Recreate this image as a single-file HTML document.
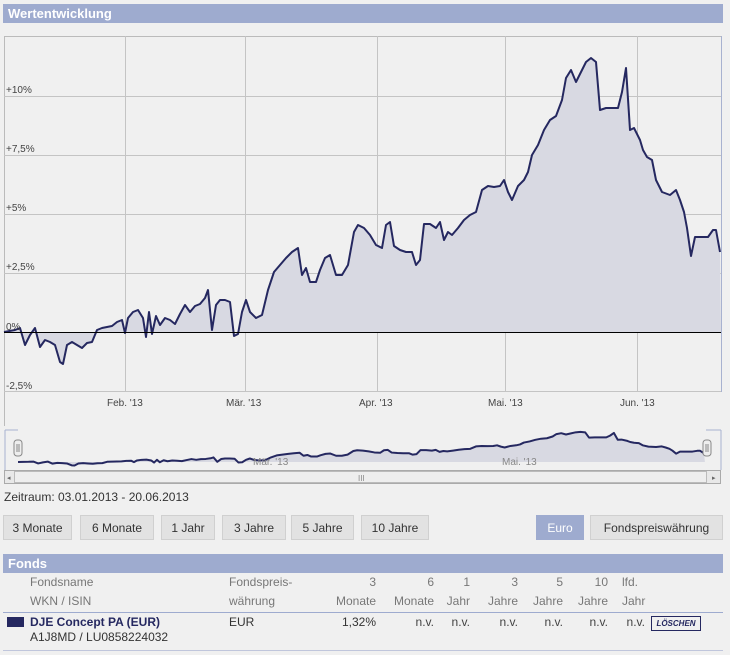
<!DOCTYPE html>
<html><head><meta charset="utf-8"><style>
body{margin:0;width:730px;height:655px;background:#f0f0f0;font-family:"Liberation Sans",sans-serif;font-size:12px;color:#333;position:relative;overflow:hidden}
.hdr{position:absolute;left:3px;width:720px;height:19px;background:#9eabcf;color:#fff;font-weight:bold;font-size:13px;line-height:19px;padding-left:5px;box-sizing:border-box}
.btn{position:absolute;top:515px;height:25px;line-height:25px;background:#e2e2e2;border:1px solid #d0d0d0;box-sizing:border-box;text-align:center;font-size:12px;color:#333}
.t{position:absolute;font-size:12px;color:#777}
.r{text-align:right}
</style></head><body>
<div class="hdr" style="top:4px">Wertentwicklung</div>
<svg style="position:absolute;left:0;top:0" width="730" height="490">
<rect x="4.5" y="36.5" width="717" height="355" fill="#f0f0f0" stroke="#bbb"/>
<line x1="721.5" y1="36" x2="721.5" y2="392" stroke="#a8b2d0"/>
<g stroke="#c4c4c4" stroke-width="1">
<line x1="4" y1="96.5" x2="721" y2="96.5"/><line x1="4" y1="155.5" x2="721" y2="155.5"/><line x1="4" y1="214.5" x2="721" y2="214.5"/><line x1="4" y1="273.5" x2="721" y2="273.5"/><line x1="4" y1="391.5" x2="721" y2="391.5"/>
<line x1="125.5" y1="36" x2="125.5" y2="392"/><line x1="245.5" y1="36" x2="245.5" y2="392"/><line x1="377.5" y1="36" x2="377.5" y2="392"/><line x1="505.5" y1="36" x2="505.5" y2="392"/><line x1="637.5" y1="36" x2="637.5" y2="392"/>
</g>
<line x1="4.5" y1="392" x2="4.5" y2="426" stroke="#bbb"/>
<g id="ln">
<path d="M4,332 L15,330 20,328 25,345 30,335 35,328 40,347 45,340 50,342 55,345 60,362 63,364 67,345 72,342 77,345 82,348 87,343 92,342 97,330 102,328 107,327 112,326 117,322 122,320 125,333 128,318 133,312 138,310 143,318 146,337 149,312 152,334 156,316 160,325 165,318 170,320 175,324 180,314 185,305 190,312 195,306 200,304 205,298 208,290 212,330 216,305 220,300 225,300 230,302 234,336 238,334 242,312 246,300 250,312 256,318 262,315 268,290 274,272 280,265 286,258 292,252 298,248 302,275 306,268 310,282 316,282 320,270 325,258 330,255 336,275 342,275 348,265 354,232 358,225 364,228 370,235 376,245 382,248 386,225 390,222 394,246 400,250 406,252 412,252 416,265 420,260 424,224 430,224 436,228 440,222 444,240 448,232 452,235 458,228 464,220 470,215 476,212 482,190 488,186 494,187 500,186 504,180 508,192 512,200 518,186 524,180 528,172 532,155 538,145 544,130 550,120 556,116 562,100 566,78 571,70 576,82 580,74 586,62 591,58 596,62 600,110 606,108 618,108 622,92 626,68 630,130 634,128 640,140 643,150 647,157 652,160 656,180 662,192 670,195 676,190 680,200 684,212 687,228 691,256 695,237 708,237 713,230 716,230 720,252 L721,332 L4,332 Z" fill="#d8d9e2" stroke="none"/>
<path d="M4,332 L15,330 20,328 25,345 30,335 35,328 40,347 45,340 50,342 55,345 60,362 63,364 67,345 72,342 77,345 82,348 87,343 92,342 97,330 102,328 107,327 112,326 117,322 122,320 125,333 128,318 133,312 138,310 143,318 146,337 149,312 152,334 156,316 160,325 165,318 170,320 175,324 180,314 185,305 190,312 195,306 200,304 205,298 208,290 212,330 216,305 220,300 225,300 230,302 234,336 238,334 242,312 246,300 250,312 256,318 262,315 268,290 274,272 280,265 286,258 292,252 298,248 302,275 306,268 310,282 316,282 320,270 325,258 330,255 336,275 342,275 348,265 354,232 358,225 364,228 370,235 376,245 382,248 386,225 390,222 394,246 400,250 406,252 412,252 416,265 420,260 424,224 430,224 436,228 440,222 444,240 448,232 452,235 458,228 464,220 470,215 476,212 482,190 488,186 494,187 500,186 504,180 508,192 512,200 518,186 524,180 528,172 532,155 538,145 544,130 550,120 556,116 562,100 566,78 571,70 576,82 580,74 586,62 591,58 596,62 600,110 606,108 618,108 622,92 626,68 630,130 634,128 640,140 643,150 647,157 652,160 656,180 662,192 670,195 676,190 680,200 684,212 687,228 691,256 695,237 708,237 713,230 716,230 720,252" fill="none" stroke="#252860" stroke-width="2" stroke-linejoin="round" vector-effect="non-scaling-stroke"/>
</g>
<line x1="4" y1="332.5" x2="721" y2="332.5" stroke="#000"/>
<g font-family="Liberation Sans" font-size="10" fill="#444">
<text x="6" y="93">+10%</text><text x="6" y="152">+7,5%</text><text x="6" y="211">+5%</text><text x="6" y="270">+2,5%</text><text x="6" y="330">0%</text><text x="6" y="389">-2,5%</text>
<text x="107" y="406">Feb. '13</text><text x="226" y="406">Mär. '13</text><text x="359" y="406">Apr. '13</text><text x="488" y="406">Mai. '13</text><text x="620" y="406">Jun. '13</text>
</g>
<!-- navigator -->
<line x1="5" y1="430" x2="5" y2="470" stroke="#a8b2d0"/><line x1="721" y1="430" x2="721" y2="470" stroke="#a8b2d0"/>
<line x1="5" y1="430" x2="18" y2="430" stroke="#a8b2d0"/><line x1="706" y1="430" x2="721" y2="430" stroke="#a8b2d0"/>
<g transform="translate(14.2,425.5) scale(0.958,0.11)"><use href="#ln"/></g>
<g font-family="Liberation Sans" font-size="10" fill="#888"><text x="253" y="465">Mär. '13</text><text x="502" y="465">Mai. '13</text></g>
<rect x="14" y="440" width="8" height="16" rx="3" fill="#eee" stroke="#888"/><line x1="17" y1="444" x2="17" y2="452" stroke="#888"/><line x1="19" y1="444" x2="19" y2="452" stroke="#888"/>
<rect x="703" y="440" width="8" height="16" rx="3" fill="#eee" stroke="#888"/><line x1="706" y1="444" x2="706" y2="452" stroke="#888"/><line x1="708" y1="444" x2="708" y2="452" stroke="#888"/>
<rect x="4.5" y="470.5" width="716" height="13" fill="#e8e8e8" stroke="#aaa"/>
<rect x="14.5" y="471.5" width="692" height="11" fill="#eee" stroke="#bbb"/>
<text x="358" y="481" font-size="8" fill="#888" font-family="Liberation Sans">III</text>
<text x="7" y="480" font-size="7" fill="#666">◂</text><text x="712" y="480" font-size="7" fill="#666">▸</text>
</svg>
<div style="position:absolute;left:4px;top:490px;font-size:12px;color:#333">Zeitraum: 03.01.2013 - 20.06.2013</div>
<div class="btn" style="left:3px;width:69px">3 Monate</div>
<div class="btn" style="left:80px;width:74px">6 Monate</div>
<div class="btn" style="left:161px;width:54px">1 Jahr</div>
<div class="btn" style="left:222px;width:64px">3 Jahre</div>
<div class="btn" style="left:291px;width:63px">5 Jahre</div>
<div class="btn" style="left:361px;width:68px">10 Jahre</div>
<div class="btn" style="left:536px;width:48px;background:#9eabcf;border-color:#9eabcf;color:#fff">Euro</div>
<div class="btn" style="left:590px;width:133px">Fondspreiswährung</div>
<div class="hdr" style="top:554px">Fonds</div>
<div class="t" style="left:30px;top:575px">Fondsname</div>
<div class="t" style="left:30px;top:594px">WKN / ISIN</div>
<div class="t" style="left:229px;top:575px">Fondspreis-</div>
<div class="t" style="left:229px;top:594px">währung</div>
<div class="t r" style="left:320px;width:56px;top:575px">3</div><div class="t r" style="left:320px;width:56px;top:594px">Monate</div>
<div class="t r" style="left:380px;width:54px;top:575px">6</div><div class="t r" style="left:380px;width:54px;top:594px">Monate</div>
<div class="t r" style="left:440px;width:30px;top:575px">1</div><div class="t r" style="left:440px;width:30px;top:594px">Jahr</div>
<div class="t r" style="left:470px;width:48px;top:575px">3</div><div class="t r" style="left:470px;width:48px;top:594px">Jahre</div>
<div class="t r" style="left:518px;width:45px;top:575px">5</div><div class="t r" style="left:518px;width:45px;top:594px">Jahre</div>
<div class="t r" style="left:563px;width:45px;top:575px">10</div><div class="t r" style="left:563px;width:45px;top:594px">Jahre</div>
<div class="t" style="left:622px;top:575px">lfd.</div><div class="t" style="left:622px;top:594px">Jahr</div>
<div style="position:absolute;left:3px;top:612px;width:720px;height:1px;background:#9eabcf"></div>
<div style="position:absolute;left:7px;top:617px;width:17px;height:10px;background:#252860"></div>
<div style="position:absolute;left:30px;top:615px;font-weight:bold;color:#252860">DJE Concept PA (EUR)</div>
<div style="position:absolute;left:30px;top:630px;color:#333">A1J8MD / LU0858224032</div>
<div style="position:absolute;left:229px;top:615px;color:#333">EUR</div>
<div class="r" style="position:absolute;left:320px;width:56px;top:615px;color:#333">1,32%</div>
<div class="t r" style="left:380px;width:54px;top:615px;color:#444">n.v.</div>
<div class="t r" style="left:440px;width:30px;top:615px;color:#444">n.v.</div>
<div class="t r" style="left:470px;width:48px;top:615px;color:#444">n.v.</div>
<div class="t r" style="left:518px;width:45px;top:615px;color:#444">n.v.</div>
<div class="t r" style="left:563px;width:45px;top:615px;color:#444">n.v.</div>
<div class="t r" style="left:608px;width:37px;top:615px;color:#444">n.v.</div>
<div style="position:absolute;left:651px;top:616px;width:48px;height:13px;border:1px solid #252860;font-size:8px;font-weight:bold;font-style:italic;color:#252860;text-align:center;line-height:13px">LÖSCHEN</div>
<div style="position:absolute;left:3px;top:650px;width:720px;height:1px;background:#c0c6dc"></div>
</body></html>
